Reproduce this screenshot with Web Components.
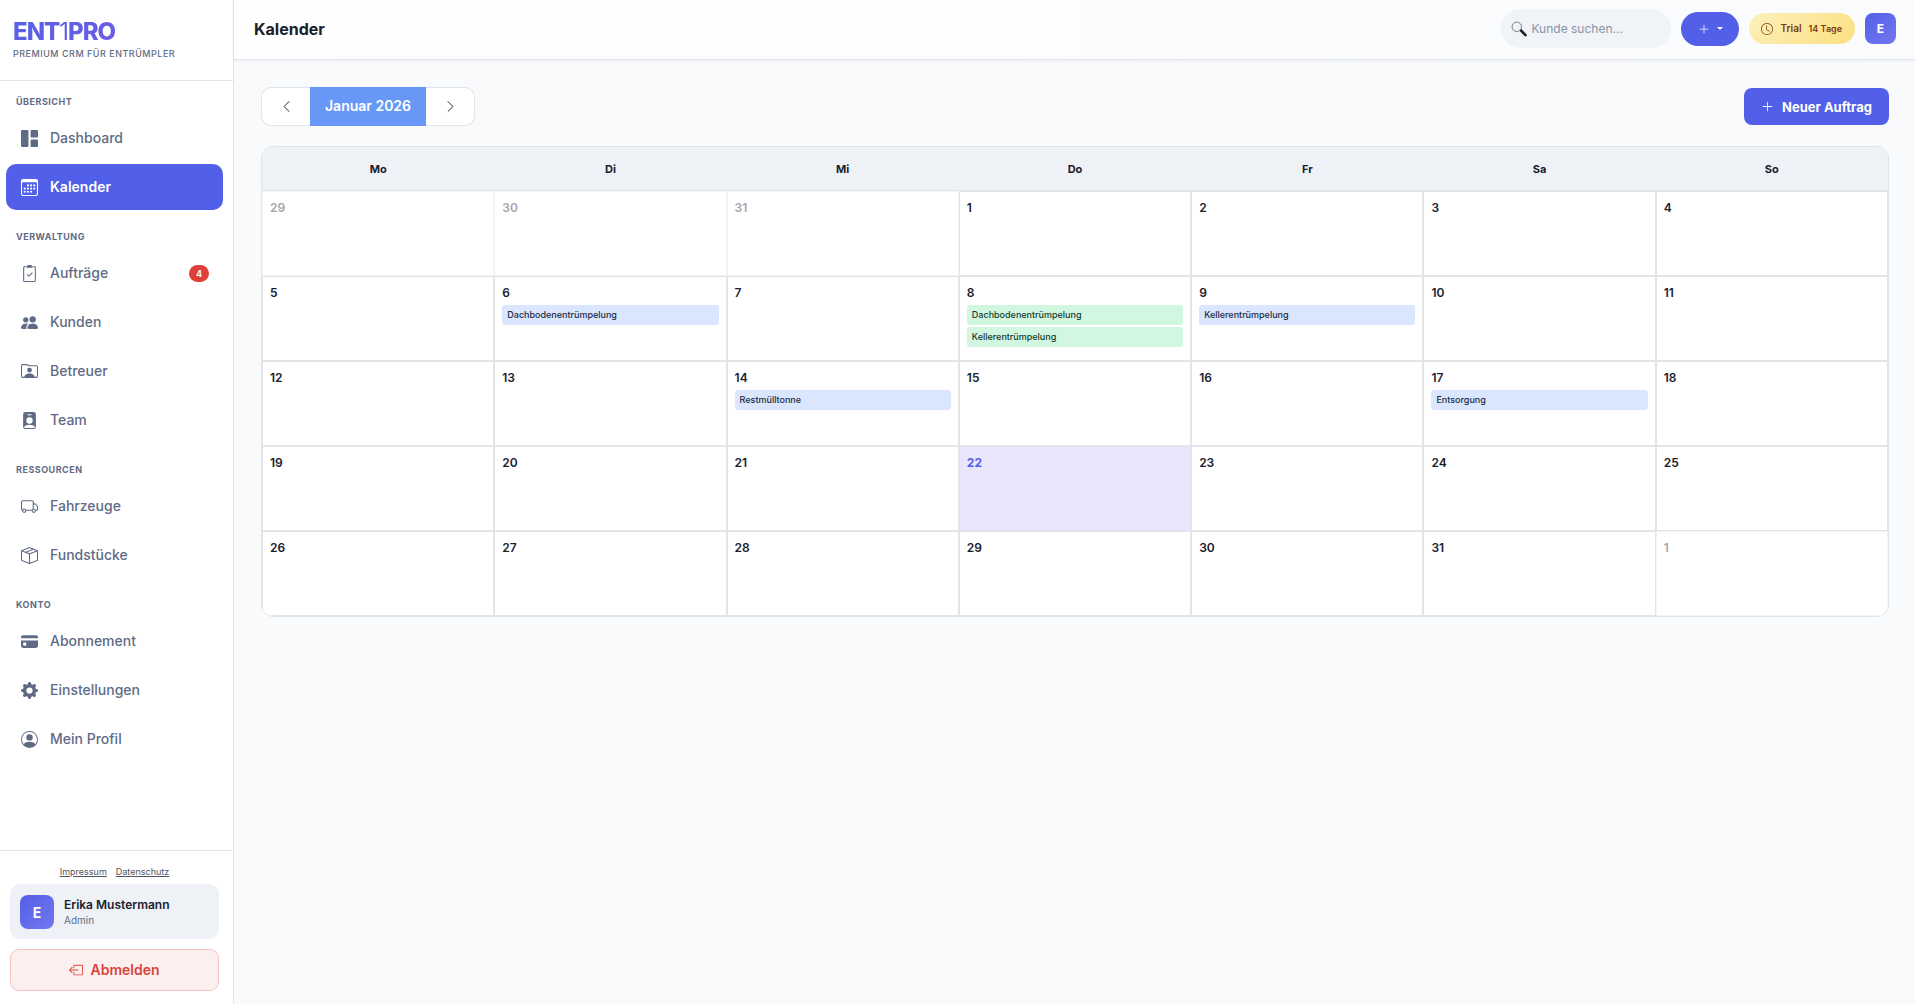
<!DOCTYPE html>
<html lang="de">
<head>
<meta charset="utf-8">
<title>Kalender – ENT1PRO</title>
<meta name="viewport" content="width=device-width, initial-scale=1">
<style>
  :root {
    --primary: #525fe8;
    --primary-2: #7478ee;
    --ink: #1a202c;
    --muted: #5f6b85;
    --line: #e0e3e8;
    --soft: #eef2f7;
    --page: #f9fafc;
  }
  body { margin: 0; background: var(--page); color: var(--ink); font-family: Inter, "Liberation Sans", sans-serif; font-size: 14px; }
</style>
</head>
<body>
<crm-app>
  <crm-sidebar slot="sidebar">
    <nav-section label="Übersicht">
      <nav-item icon="grid">Dashboard</nav-item>
      <nav-item icon="calendar" active>Kalender</nav-item>
    </nav-section>
    <nav-section label="Verwaltung">
      <nav-item icon="clipboard" badge="4">Aufträge</nav-item>
      <nav-item icon="people">Kunden</nav-item>
      <nav-item icon="folderPerson">Betreuer</nav-item>
      <nav-item icon="badge">Team</nav-item>
    </nav-section>
    <nav-section label="Ressourcen">
      <nav-item icon="truck">Fahrzeuge</nav-item>
      <nav-item icon="box">Fundstücke</nav-item>
    </nav-section>
    <nav-section label="Konto">
      <nav-item icon="card">Abonnement</nav-item>
      <nav-item icon="gear">Einstellungen</nav-item>
      <nav-item icon="person">Mein Profil</nav-item>
    </nav-section>
    <user-panel slot="footer" name="Erika Mustermann" role-name="Admin"></user-panel>
  </crm-sidebar>
  <top-bar slot="header" heading="Kalender">
    <customer-search></customer-search>
    <quick-add></quick-add>
    <trial-badge days="14 Tage">Trial</trial-badge>
    <user-avatar>E</user-avatar>
  </top-bar>
  <calendar-toolbar month="Januar 2026"></calendar-toolbar>
  <month-calendar></month-calendar>
</crm-app>

<script>
const ICONS = {
  grid: '<path d="M0 1a1 1 0 0 1 1-1h5a1 1 0 0 1 1 1v14a1 1 0 0 1-1 1H1a1 1 0 0 1-1-1zm9 0a1 1 0 0 1 1-1h5a1 1 0 0 1 1 1v5a1 1 0 0 1-1 1h-5a1 1 0 0 1-1-1zm0 9a1 1 0 0 1 1-1h5a1 1 0 0 1 1 1v5a1 1 0 0 1-1 1h-5a1 1 0 0 1-1-1z"/>',
  calendar: '<path d="M14 0H2a2 2 0 0 0-2 2v12a2 2 0 0 0 2 2h12a2 2 0 0 0 2-2V2a2 2 0 0 0-2-2M1 3.857C1 3.384 1.448 3 2 3h12c.552 0 1 .384 1 .857v10.286c0 .473-.448.857-1 .857H2c-.552 0-1-.384-1-.857z"/>' +
    [[6.5,6],[9.5,6],[12.5,6],[3.5,9],[6.5,9],[9.5,9],[12.5,9],[3.5,12],[6.5,12],[9.5,12]].map(([x, y]) => `<circle cx="${x}" cy="${y}" r="1"/>`).join(''),
  clipboard: '<path d="M9.5 0a.5.5 0 0 1 .5.5.5.5 0 0 0 .5.5.5.5 0 0 1 .5.5V2a.5.5 0 0 1-.5.5h-5A.5.5 0 0 1 5 2v-.5a.5.5 0 0 1 .5-.5.5.5 0 0 0 .5-.5.5.5 0 0 1 .5-.5z"/><path d="M3 2.5a.5.5 0 0 1 .5-.5H4a.5.5 0 0 0 0-1h-.5A1.5 1.5 0 0 0 2 2.5v12A1.5 1.5 0 0 0 3.5 16h9a1.5 1.5 0 0 0 1.5-1.5v-12A1.5 1.5 0 0 0 12.5 1H12a.5.5 0 0 0 0 1h.5a.5.5 0 0 1 .5.5v12a.5.5 0 0 1-.5.5h-9a.5.5 0 0 1-.5-.5z"/><path d="M10.854 7.854a.5.5 0 0 0-.708-.708L7.5 9.793 6.354 8.646a.5.5 0 1 0-.708.708l1.5 1.5a.5.5 0 0 0 .708 0z"/>',
  people: '<path d="M7 14s-1 0-1-1 1-4 5-4 5 3 5 4-1 1-1 1zm4-6a3 3 0 1 0 0-6 3 3 0 0 0 0 6m-5.784 6A2.24 2.24 0 0 1 5 13c0-1.355.68-2.75 1.936-3.72A6.3 6.3 0 0 0 5 9c-4 0-5 3-5 4s1 1 1 1zM4.5 8a2.5 2.5 0 1 0 0-5 2.5 2.5 0 0 0 0 5"/>',
  folderPerson: '<path d="M3.5 13.5h-2a1 1 0 0 1-1-1v-10a1 1 0 0 1 1-1h4.2l1.2 1h7.6a1 1 0 0 1 1 1v9a1 1 0 0 1-1 1h-2" fill="none" stroke="currentColor"/><circle cx="8" cy="6.7" r="2.3"/><path d="M3 14c0-2.2 1.6-4.2 5-4.2s5 2 5 4.2z"/>',
  badge: '<path d="M2 2a2 2 0 0 1 2-2h8a2 2 0 0 1 2 2v12a2 2 0 0 1-2 2H4a2 2 0 0 1-2-2zm4.5 0a.5.5 0 0 0 0 1h3a.5.5 0 0 0 0-1zM8 11a3 3 0 1 0 0-6 3 3 0 0 0 0 6m5 2.755C12.146 12.825 10.623 12 8 12s-4.146.826-5 1.755V14a1 1 0 0 0 1 1h8a1 1 0 0 0 1-1z"/>',
  truck: '<path d="M0 3.5A1.5 1.5 0 0 1 1.5 2h9A1.5 1.5 0 0 1 12 3.5V5h1.02a1.5 1.5 0 0 1 1.17.563l1.481 1.85a1.5 1.5 0 0 1 .329.938V10.5a1.5 1.5 0 0 1-1.5 1.5H14a2 2 0 1 1-4 0H5a2 2 0 1 1-3.998-.085A1.5 1.5 0 0 1 0 10.5zm1.294 7.456A2 2 0 0 1 4.732 11h5.536a2 2 0 0 1 .732-.732V3.5a.5.5 0 0 0-.5-.5h-9a.5.5 0 0 0-.5.5v7a.5.5 0 0 0 .294.456M12 10a2 2 0 0 1 1.732 1h.768a.5.5 0 0 0 .5-.5V8.35a.5.5 0 0 0-.11-.312l-1.48-1.85A.5.5 0 0 0 13.02 6H12zm-9 1a1 1 0 1 0 0 2 1 1 0 0 0 0-2m9 0a1 1 0 1 0 0 2 1 1 0 0 0 0-2"/>',
  box: '<path d="M8.186 1.113a.5.5 0 0 0-.372 0L1.846 3.5l2.404.961L10.404 2zm3.564 1.426L5.596 5 8 5.961 14.154 3.5zm3.25 1.7-6.5 2.6v7.922l6.5-2.6V4.24zM7.5 14.762V6.838L1 4.239v7.923zM7.443.184a1.5 1.5 0 0 1 1.114 0l7.129 2.852A.5.5 0 0 1 16 3.5v8.662a1 1 0 0 1-.629.928l-7.185 2.874a.5.5 0 0 1-.372 0L.63 13.09a1 1 0 0 1-.63-.928V3.5a.5.5 0 0 1 .314-.464z"/>',
  card: '<path d="M0 4a2 2 0 0 1 2-2h12a2 2 0 0 1 2 2v1H0z"/><path fill-rule="evenodd" d="M0 7v5a2 2 0 0 0 2 2h12a2 2 0 0 0 2-2V7zm3 2h1a1 1 0 0 1 1 1v1a1 1 0 0 1-1 1H3a1 1 0 0 1-1-1v-1a1 1 0 0 1 1-1"/>',
  gear: '<path d="M9.405 1.05c-.413-1.4-2.397-1.4-2.81 0l-.1.34a1.464 1.464 0 0 1-2.105.872l-.31-.17c-1.283-.698-2.686.705-1.987 1.987l.169.311c.446.82.023 1.841-.872 2.105l-.34.1c-1.4.413-1.4 2.397 0 2.81l.34.1a1.464 1.464 0 0 1 .872 2.105l-.17.31c-.698 1.283.705 2.686 1.987 1.987l.311-.169a1.464 1.464 0 0 1 2.105.872l.1.34c.413 1.4 2.397 1.4 2.81 0l.1-.34a1.464 1.464 0 0 1 2.105-.872l.31.17c1.283.698 2.686-.705 1.987-1.987l-.169-.311a1.464 1.464 0 0 1 .872-2.105l.34-.1c1.4-.413 1.4-2.397 0-2.81l-.34-.1a1.464 1.464 0 0 1-.872-2.105l.17-.31c.698-1.283-.705-2.686-1.987-1.987l-.311.169a1.464 1.464 0 0 1-2.105-.872zM8 10.93a2.929 2.929 0 1 1 0-5.86 2.929 2.929 0 0 1 0 5.858z"/>',
  person: '<path d="M11 6a3 3 0 1 1-6 0 3 3 0 0 1 6 0"/><path fill-rule="evenodd" d="M0 8a8 8 0 1 1 16 0A8 8 0 0 1 0 8m8-7a7 7 0 0 0-5.468 11.37C3.242 11.226 4.805 10 8 10s4.757 1.225 5.468 2.37A7 7 0 0 0 8 1"/>',
  logout: '<path d="M6 12.5a.5.5 0 0 0 .5.5h8a.5.5 0 0 0 .5-.5v-9a.5.5 0 0 0-.5-.5h-8a.5.5 0 0 0-.5.5v2a.5.5 0 0 1-1 0v-2A1.5 1.5 0 0 1 6.5 2h8A1.5 1.5 0 0 1 16 3.5v9a1.5 1.5 0 0 1-1.5 1.5h-8A1.5 1.5 0 0 1 5 12.5v-2a.5.5 0 0 1 1 0z"/><path d="M.146 8.354a.5.5 0 0 1 0-.708l3-3a.5.5 0 1 1 .708.708L1.707 7.5H10.5a.5.5 0 0 1 0 1H1.707l2.147 2.146a.5.5 0 0 1-.708.708z"/>',
  clock: '<path d="M8 3.5a.5.5 0 0 0-1 0V9a.5.5 0 0 0 .252.434l3.5 2a.5.5 0 0 0 .496-.868L8 8.71z"/><path d="M8 16A8 8 0 1 0 8 0a8 8 0 0 0 0 16m7-8A7 7 0 1 1 1 8a7 7 0 0 1 14 0"/>',
  plus: '<path d="M8 2a.5.5 0 0 1 .5.5v5h5a.5.5 0 0 1 0 1h-5v5a.5.5 0 0 1-1 0v-5h-5a.5.5 0 0 1 0-1h5v-5A.5.5 0 0 1 8 2"/>',
  left: '<path d="M11 2 5 8l6 6" fill="none" stroke="currentColor" stroke-width="1.2" stroke-linecap="round" stroke-linejoin="round"/>',
  right: '<path d="m5 2 6 6-6 6" fill="none" stroke="currentColor" stroke-width="1.2" stroke-linecap="round" stroke-linejoin="round"/>',
  search: '<path d="m9.5 9 5 5.2" stroke="#222" stroke-width="2.6" stroke-linecap="round"/><circle cx="5.8" cy="5.8" r="4.7" fill="#eef3f8" stroke="#7b8188" stroke-width="1"/><path d="M3 5.5A3 3 0 0 1 5.5 3" fill="none" stroke="#fff"/>'
};

class Base extends HTMLElement {
  connectedCallback() {
    if (this.shadowRoot) return;
    this.attachShadow({ mode: 'open' }).innerHTML =
      `<style>*{box-sizing:border-box}:host{display:block;box-sizing:border-box}${this.css()}</style>${this.html()}`;
  }
  attr(name) { return this.getAttribute(name) || ''; }
}

customElements.define('ui-icon', class extends Base {
  css() { return ':host{display:block;flex:none;width:var(--icon,17px);height:var(--icon,17px)}svg{display:block;width:100%;height:100%}'; }
  html() { return `<svg viewBox="0 0 16 16" fill="currentColor" aria-hidden="true">${ICONS[this.attr('name')]}</svg>`; }
});

customElements.define('crm-app', class extends Base {
  css() { return `
    :host{display:flex;min-height:100vh}
    .side{flex:none;width:234px;display:flex}
    .side ::slotted(*){flex:1}
    .body{flex:1;min-width:0;display:flex;flex-direction:column}
    main{padding:27px 26px 27px 27px;display:flex;flex-direction:column;gap:20px}`; }
  html() { return '<div class="side"><slot name="sidebar"></slot></div><div class="body"><slot name="header"></slot><main><slot></slot></main></div>'; }
});

customElements.define('crm-sidebar', class extends Base {
  css() { return `
    :host{display:flex;flex-direction:column;background:#fff;border-right:1px solid var(--line)}
    .brand{height:81px;padding:17px 13px 0;border-bottom:1px solid var(--line)}
    .logo{display:block;width:max-content;font-size:24px;line-height:29px;font-weight:800;letter-spacing:-1px;color:transparent;background:linear-gradient(135deg,#5560e9,#6c5fe0);background-clip:text;-webkit-background-clip:text}
    .logo span{font-weight:400}
    .tag{font-size:9px;line-height:15px;font-weight:500;letter-spacing:.5px;text-transform:uppercase;color:var(--muted)}
    nav{flex:1}
    footer{border-top:1px solid var(--line);padding:13px 14px 13px 10px}`; }
  html() { return `<div class="brand"><div class="logo">ENT<span>1</span>PRO</div><div class="tag">Premium CRM für Entrümpler</div></div>
    <nav aria-label="Hauptnavigation"><slot></slot></nav><footer><slot name="footer"></slot></footer>`; }
});

customElements.define('nav-section', class extends Base {
  css() { return `
    :host{display:flex;flex-direction:column;gap:3px;padding:13px 10px 6px 6px}
    h2{margin:0 0 3px;padding-left:10px;font-size:9px;line-height:15px;font-weight:700;letter-spacing:.5px;text-transform:uppercase;color:var(--muted)}`; }
  html() { return `<h2>${this.attr('label')}</h2><slot></slot>`; }
});

customElements.define('nav-item', class extends Base {
  css() { return `
    a{display:flex;align-items:center;gap:12px;height:46px;padding:0 14px 0 15px;border-radius:10px;color:var(--muted);font-size:14px;line-height:20px;font-weight:500;text-decoration:none}
    :host([active]) a{background:var(--primary);color:#fff;font-weight:600}
    .text{flex:1}
    .badge{min-width:20px;padding:0 6px;border-radius:9px;background:#dc4038;color:#fff;font-size:9px;line-height:17px;font-weight:700;text-align:center}`; }
  html() {
    const badge = this.attr('badge');
    return `<a href="#"${this.hasAttribute('active') ? ' aria-current="page"' : ''}><ui-icon name="${this.attr('icon')}"></ui-icon><span class="text"><slot></slot></span>${badge ? `<span class="badge">${badge}</span>` : ''}</a>`;
  }
});

customElements.define('user-avatar', class extends Base {
  css() { return `:host{flex:none;display:grid;place-items:center;width:var(--size,31px);height:var(--size,31px);border-radius:8px;background:linear-gradient(135deg,var(--primary),var(--primary-2));color:#fff;font-size:var(--letter,12px);font-weight:700}`; }
  html() { return '<slot></slot>'; }
});

customElements.define('user-panel', class extends Base {
  css() { return `
    .links{display:flex;justify-content:center;gap:9px;font-size:9px;line-height:15px;margin-bottom:5px}
    .links a{color:#50565f}
    .card{display:flex;align-items:center;gap:10px;height:55px;padding:1px 10px 0;border-radius:10px;background:var(--soft)}
    user-avatar{--size:34px;--letter:14px}
    .name{font-size:12px;line-height:16px;font-weight:600}
    .role{font-size:10px;line-height:15px;color:var(--muted)}
    button{display:flex;align-items:center;justify-content:center;gap:7px;width:100%;height:42px;margin-top:10px;border:1px solid #f3c3c6;border-radius:9px;background:#fcf0ef;color:#d9443a;font:600 14px/20px Inter,sans-serif;--icon:14px}`; }
  html() { return `<div class="links"><a href="#">Impressum</a><a href="#">Datenschutz</a></div>
    <div class="card"><user-avatar>E</user-avatar><div><div class="name">${this.attr('name')}</div><div class="role">${this.attr('role-name')}</div></div></div>
    <button type="button"><ui-icon name="logout"></ui-icon>Abmelden</button>`; }
});

customElements.define('top-bar', class extends Base {
  css() { return `
    :host{display:flex;align-items:center;gap:10px;height:60px;padding:0 19px 2px 20px;background:linear-gradient(90deg,#fff,#fafbfd);border-bottom:1px solid var(--line);box-shadow:0 1px 3px rgba(30,40,70,.06)}
    h1{flex:1;margin:0;font-size:16px;line-height:24px;font-weight:700}`; }
  html() { return `<h1>${this.attr('heading')}</h1><slot></slot>`; }
});

customElements.define('customer-search', class extends Base {
  css() { return `
    label{display:flex;align-items:center;gap:4px;width:170px;height:39px;padding:0 14px 0 10px;border-radius:20px;background:#f0f3f8;--icon:16px}
    input{flex:1;min-width:0;padding:0;border:0;outline:0;background:none;color:var(--ink);font:400 12px/18px Inter,sans-serif}
    input::placeholder{color:#8a94a6;opacity:1}`; }
  html() { return '<label><ui-icon name="search"></ui-icon><input type="search" placeholder="Kunde suchen..." aria-label="Kunde suchen"></label>'; }
});

customElements.define('quick-add', class extends Base {
  css() { return `
    button{display:flex;align-items:center;justify-content:center;gap:7px;width:58px;height:34px;padding:0;border:0;border-radius:17px;background:var(--primary);color:#fff;--icon:12px}
    i{width:0;border:3px solid transparent;border-top-color:#fff;border-bottom:0}`; }
  html() { return '<button type="button" aria-label="Neu anlegen"><ui-icon name="plus"></ui-icon><i></i></button>'; }
});

customElements.define('trial-badge', class extends Base {
  css() { return `
    :host{display:flex;align-items:center;gap:7px;height:31px;padding:0 13px 0 12px;border-radius:16px;background:linear-gradient(135deg,#fdf0bd,#fbdf80);color:#7c3a10;font-size:10px;line-height:15px;font-weight:600;--icon:12px}
    small{font-size:9px;font-weight:600}`; }
  html() { return `<ui-icon name="clock"></ui-icon><span><slot></slot></span><small>${this.attr('days')}</small>`; }
});

customElements.define('calendar-toolbar', class extends Base {
  css() { return `
    :host{display:flex;align-items:center;justify-content:space-between}
    .group{display:flex}
    button{font-family:inherit;padding:0}
    .step{display:grid;place-items:center;width:49px;height:39px;border:1px solid var(--line);background:#fff;color:var(--ink);--icon:13px}
    .step:first-child{border-right:0;border-radius:10px 0 0 10px}
    .step:last-child{border-left:0;border-radius:0 10px 10px 0}
    .month{padding:0 15px;background:#6798f8;color:#fff;font-size:14px;line-height:37px;font-weight:600}
    .new{display:flex;align-items:center;gap:8px;height:37px;padding:0 17px;border:0;border-radius:8px;background:var(--primary);color:#fff;font-size:13px;line-height:20px;font-weight:700;--icon:13px}`; }
  html() { return `<div class="group"><button class="step" type="button" aria-label="Vorheriger Monat"><ui-icon name="left"></ui-icon></button><span class="month">${this.attr('month')}</span><button class="step" type="button" aria-label="Nächster Monat"><ui-icon name="right"></ui-icon></button></div>
    <button class="new" type="button"><ui-icon name="plus"></ui-icon>Neuer Auftrag</button>`; }
});

customElements.define('calendar-event', class extends Base {
  css() { return `
    :host{height:20px;padding:0 5px;border-radius:3px;background:#d9e6fd;color:#1b2a44;font-size:9px;line-height:19px;font-weight:500;white-space:nowrap;overflow:hidden}
    :host([done]){background:#d2f7e0;color:#153a30}`; }
  html() { return '<slot></slot>'; }
});

customElements.define('month-calendar', class extends Base {
  css() { return `
    :host{border:1px solid var(--line);border-radius:12px;overflow:hidden;background:#fff}
    table{width:100%;table-layout:fixed;border-collapse:separate;border-spacing:0}
    th{height:44px;padding:0;background:var(--soft);border-bottom:1px solid var(--line);font-size:11px;line-height:16px;font-weight:700}
    td{height:85px;padding:7px;border:1px solid #e2e4e8;vertical-align:top;background:#fff}
    .date{font-size:12px;line-height:18px;font-weight:600;margin-bottom:3px}
    .events{display:grid;gap:2px}
    .other{border-color:#f2f4f6}
    .other .date{color:#a5a6aa}
    .today{background:#e9e5fc}
    .today .date{color:var(--primary);font-weight:700}`; }
  html() {
    const events = {
      6: [['Dachbodenentrümpelung']],
      8: [['Dachbodenentrümpelung', 'done'], ['Kellerentrümpelung', 'done']],
      9: [['Kellerentrümpelung']],
      14: [['Restmülltonne']],
      17: [['Entsorgung']]
    };
    const today = 22, start = new Date(2026, 0, -2);
    const cell = i => {
      const d = new Date(start.getFullYear(), start.getMonth(), start.getDate() + i);
      const inMonth = d.getMonth() === 0, n = d.getDate();
      const list = inMonth && events[n] || [];
      return `<td class="${!inMonth ? 'other' : n === today ? 'today' : ''}"><div class="date">${n}</div>${list.length ? `<div class="events">${list.map(([t, s = '']) => `<calendar-event ${s}>${t}</calendar-event>`).join('')}</div>` : ''}</td>`;
    };
    const rows = [0, 1, 2, 3, 4].map(r => `<tr>${[0, 1, 2, 3, 4, 5, 6].map(c => cell(r * 7 + c)).join('')}</tr>`).join('');
    return `<table><thead><tr>${['Mo', 'Di', 'Mi', 'Do', 'Fr', 'Sa', 'So'].map(d => `<th scope="col">${d}</th>`).join('')}</tr></thead><tbody>${rows}</tbody></table>`;
  }
});
</script>
</body>
</html>
